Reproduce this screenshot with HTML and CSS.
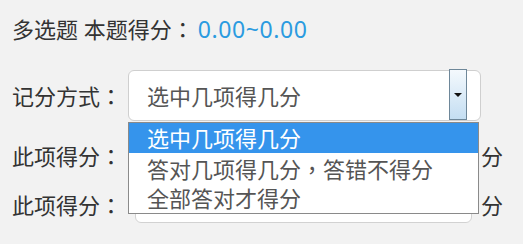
FILE: index.html
```html
<!DOCTYPE html>
<html lang="zh-CN">
<head>
  <meta charset="UTF-8" />
  <title>多选题设置</title>
  <link rel="stylesheet" href="styles.css">
</head>
<body>

<div class="form">
  <p class="title">多选题 本题得分<span class="punct" lang="zh-TW">：</span><span class="score">0.00~0.00</span></p>

  <div class="row mode-row">
    <label class="label mode-label">记分方式<span class="punct" lang="zh-TW">：</span></label>
    <div class="select">
      <span class="value">选中几项得几分</span>
      <span class="drop-btn"><span class="caret"></span></span>
      <ul class="options">
        <li class="option active">选中几项得几分</li>
        <li class="option">答对几项得几分<span class="punct" lang="zh-TW">，</span>答错不得分</li>
        <li class="option">全部答对才得分</li>
      </ul>
    </div>
  </div>

  <div class="row item-row first">
    <label class="label">此项得分<span class="punct" lang="zh-TW">：</span></label>
    <div class="input"></div>
    <span class="unit">分</span>
  </div>

  <div class="row item-row">
    <label class="label">此项得分<span class="punct" lang="zh-TW">：</span></label>
    <div class="input"></div>
    <span class="unit">分</span>
  </div>
</div>

</body>
</html>
```

FILE: styles.css
```css
body {
  margin: 0;
  background: #f2f2f2;
  color: #333;
  font-family: "Noto Sans", "Noto Sans CJK SC", sans-serif;
  font-size: 22px;
}

.form {
  padding: 13px 0 0 12px;
}

.title {
  margin: 0;
  height: 30px;
  line-height: 30px;
}

/* centred full-width colon / comma */
.punct {
  font-family: "Noto Sans CJK TC", sans-serif;
}

.score {
  color: #2b9be0;
  margin-left: 4px;
  font-size: 23px;
  letter-spacing: 0.6px;
}

.row {
  display: flex;
  align-items: center;
}

.label {
  line-height: 30px;
}

.mode-row {
  margin-top: 27px;
}

.mode-label {
  width: 116px;
}

.select {
  position: relative;
  box-sizing: border-box;
  width: 353px;
  height: 51px;
  background: #fff;
  border: 1px solid #cfcfcf;
  border-radius: 6px;
  display: flex;
  align-items: center;
}

.value {
  flex: 1;
  padding-left: 18px;
  color: #555;
  line-height: 30px;
}

.drop-btn {
  box-sizing: border-box;
  width: 18px;
  height: 51px;
  margin-right: 13px;
  margin-top: -2px;
  border: 1px solid #6e8799;
  background: linear-gradient(to bottom, #f4f9fd, #c4def2);
  display: flex;
  align-items: center;
  justify-content: center;
}

.caret {
  width: 0;
  height: 0;
  border-left: 4px solid transparent;
  border-right: 4px solid transparent;
  border-top: 4px solid #111;
}

.options {
  position: absolute;
  top: 51px;
  left: -1px;
  width: 351px;
  margin: 0;
  padding: 0;
  list-style: none;
  background: #fff;
  border: 1px solid #8a8a8a;
  box-sizing: border-box;
  z-index: 2;
}

.option {
  height: 30px;
  line-height: 30px;
  padding-left: 18px;
  color: #555;
  white-space: nowrap;
}

.option.active {
  background: #3594ec;
  color: #fff;
}

.item-row {
  height: 37px;
  margin-top: 12px;
}

.item-row.first {
  margin-top: 16px;
}

.item-row .label {
  width: 123px;
}

.input {
  box-sizing: border-box;
  width: 337px;
  height: 37px;
  background: #fff;
  border: 1px solid #d2d2d2;
  border-radius: 6px;
}

.unit {
  margin-left: 9px;
  line-height: 30px;
}
```
